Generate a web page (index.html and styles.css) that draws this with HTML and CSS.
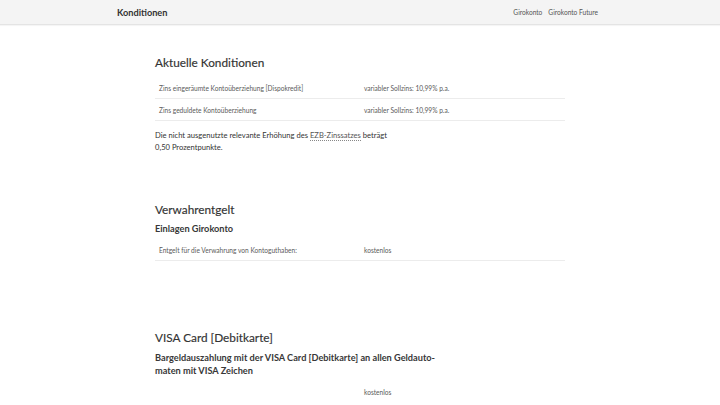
FILE: index.html
```html
<!DOCTYPE html>
<html lang="de">
<head>
<meta charset="utf-8">
<title>Konditionen</title>
<link rel="stylesheet" href="styles.css">
</head>
<body>
<header class="topbar">
  <div class="topbar-inner">
    <div class="brand">Konditionen</div>
    <nav class="nav">
      <a href="#">Girokonto</a>
      <a href="#">Girokonto Future</a>
    </nav>
  </div>
</header>
<main class="content">
  <section class="block first">
    <h2>Aktuelle Konditionen</h2>
    <table class="cond">
      <tr><td>Zins eingeräumte Kontoüberziehung [Dispokredit]</td><td>variabler Sollzins: 10,99% p.a.</td></tr>
      <tr><td>Zins geduldete Kontoüberziehung</td><td>variabler Sollzins: 10,99% p.a.</td></tr>
    </table>
    <p class="note">Die nicht ausgenutzte relevante Erhöhung des <a href="#" class="dotted">EZB-Zinssatzes</a> beträgt<br>0,50 Prozentpunkte.</p>
  </section>
  <section class="block second">
    <h2>Verwahrentgelt</h2>
    <h3>Einlagen Girokonto</h3>
    <table class="cond">
      <tr><td>Entgelt für die Verwahrung von Kontoguthaben:</td><td>kostenlos</td></tr>
    </table>
  </section>
  <section class="block third">
    <h2>VISA Card [Debitkarte]</h2>
    <h3>Bargeldauszahlung mit der VISA Card [Debitkarte] an allen Geldauto-<br>maten mit VISA Zeichen</h3>
    <table class="cond noline">
      <tr><td></td><td>kostenlos</td></tr>
    </table>
  </section>
</main>
</body>
</html>
```
FILE: styles.css
```css
* { box-sizing: border-box; }
html, body { margin: 0; padding: 0; }
body {
  font-family: "Lato", "Open Sans", sans-serif;
  color: #333;
  background: #fff;
  overflow: hidden;
}
.topbar {
  height: 25px;
  background: #f4f4f4;
  border-bottom: 1px solid #e4e4e4;
  box-shadow: 0 1px 1px rgba(0,0,0,0.04);
}
.topbar-inner {
  width: 481px;
  margin: 0 0 0 117px;
  height: 24px;
  display: flex;
  align-items: center;
  justify-content: space-between;
}
.brand {
  font-size: 9.2px;
  font-weight: 700;
  color: #333;
}
.nav { display: flex; gap: 6px; }
.nav a {
  font-size: 6.6px;
  color: #555;
  text-decoration: none;
}
.content {
  width: 410px;
  margin-left: 155px;
}
h2 {
  font-size: 11.8px;
  font-weight: 400;
  color: #333;
  margin: 0;
  line-height: 16px;
  -webkit-text-stroke: 0.15px #333;
}
h3 {
  font-size: 9.2px;
  font-weight: 700;
  color: #383838;
  margin: 0;
  line-height: 13px;
}
.block.first { padding-top: 30px; }
.block.second { padding-top: 49px; }
.block.third { padding-top: 69px; }
.block.first h2 { margin-bottom: 6px; }
.block.second h2 { margin-bottom: 4px; }
.block.third h2 { margin-bottom: 5px; }
.block.second h3 { margin-bottom: 4px; }
.block.third h3 { margin-bottom: 4px; }
.cond {
  width: 100%;
  border-collapse: collapse;
  table-layout: fixed;
}
.cond td {
  font-size: 6.6px;
  color: #5a5a5a;
  padding: 7px 4px 6px;
  line-height: 8px;
  border-bottom: 1px solid #ececec;
  width: 50%;
}
.cond.noline td { border-bottom: none; }
.note {
  font-size: 7.6px;
  line-height: 12px;
  color: #333;
  margin: 8px 0 0;
}
.dotted {
  color: #555;
  text-decoration: none;
  border-bottom: 1px dotted #888;
}
```
